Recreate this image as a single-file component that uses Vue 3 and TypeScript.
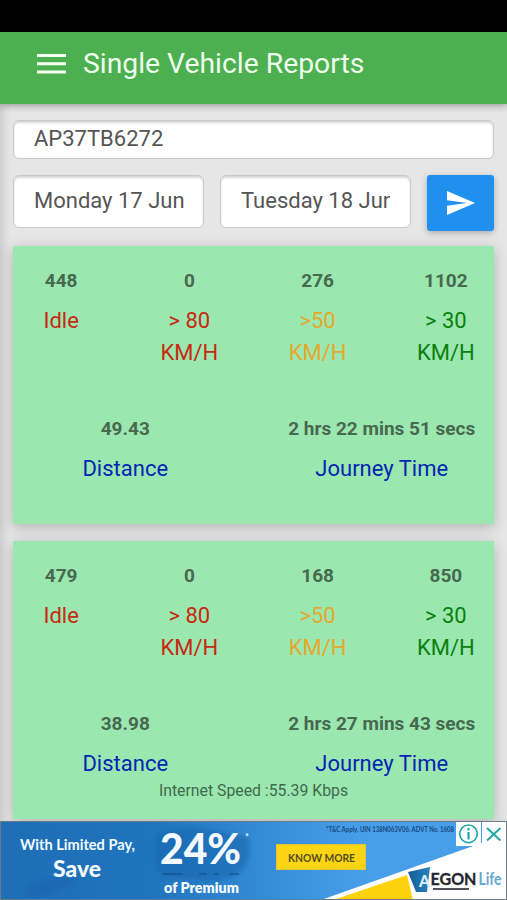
<script setup lang="ts">
interface Speed {
  value: string
  lines: string[]
  tone: string
}
interface Report {
  speeds: Speed[]
  distance: string
  time: string
}

const makeReport = (values: string[], distance: string, time: string): Report => ({
  speeds: [
    { value: values[0], lines: ['Idle'], tone: 'red' },
    { value: values[1], lines: ['> 80', 'KM/H'], tone: 'red' },
    { value: values[2], lines: ['>50', 'KM/H'], tone: 'orange' },
    { value: values[3], lines: ['> 30', 'KM/H'], tone: 'green' },
  ],
  distance,
  time,
})

const reports: Report[] = [
  makeReport(['448', '0', '276', '1102'], '49.43', '2 hrs 22 mins 51 secs'),
  makeReport(['479', '0', '168', '850'], '38.98', '2 hrs 27 mins 43 secs'),
]
</script>

<template>
  <div class="screen">
    <div class="status"></div>
    <header class="bar">
      <svg class="menu" width="29" height="20" viewBox="0 0 29 20">
        <path d="M0 0h29v3H0zM0 8.200h29v3H0zM0 16.400h29v3H0z" fill="#f4fff2" />
      </svg>
      <h1 class="title">Single Vehicle Reports</h1>
    </header>
    <main class="content">
      <div class="field vehicle">AP37TB6272</div>
      <div class="filters">
        <div class="field date"><span class="clip">Monday 17 Jun</span></div>
        <div class="field date"><span class="clip cut">Tuesday 18 Jun</span></div>
        <button class="send" type="button" aria-label="Send">
          <svg width="28" height="24" viewBox="0 0 28 24">
            <path d="M0 0L28 12L0 24V14.700L20 12L0 9.300z" fill="#fff" />
          </svg>
        </button>
      </div>
      <section v-for="(r, i) in reports" :key="i" class="card">
        <div class="row speeds">
          <div v-for="(s, j) in r.speeds" :key="j" class="cell">
            <b class="value">{{ s.value }}</b>
            <span v-for="l in s.lines" :key="l" class="label" :class="s.tone">{{ l }}</span>
          </div>
        </div>
        <div class="row totals">
          <div class="cell">
            <b class="value">{{ r.distance }}</b>
            <span class="label blue">Distance</span>
          </div>
          <div class="cell">
            <b class="value">{{ r.time }}</b>
            <span class="label blue">Journey Time</span>
          </div>
        </div>
      </section>
      <div class="net">Internet Speed :55.39 Kbps</div>
    </main>
    <footer class="ad">
      <svg width="507" height="79" viewBox="0 0 507 79">
        <defs>
          <linearGradient id="sky" x1="0" y1="0" x2="1" y2="0">
            <stop offset="0" stop-color="#1d6eb5" />
            <stop offset=".3" stop-color="#1f74bd" />
            <stop offset=".52" stop-color="#358cd6" />
            <stop offset=".72" stop-color="#479ee9" />
            <stop offset="1" stop-color="#479ee9" />
          </linearGradient>
          <linearGradient id="tile" x1="0" y1="0" x2="1" y2="0">
            <stop offset="0" stop-color="#175d94" />
            <stop offset="1" stop-color="#2482c0" />
          </linearGradient>
          <filter id="soft" x="-20%" y="-20%" width="140%" height="140%">
            <feGaussianBlur stdDeviation="2" />
          </filter>
        </defs>
        <rect width="507" height="79" fill="url(#sky)" />
        <path d="M26 70Q30 62 48 60L62 55L74 62L58 68L46 76H28z" fill="#1a63b0" opacity=".6" filter="url(#soft)" />
        <path d="M158 12Q180 4 205 8T247 15Q254 38 240 51Q224 63 203 60T160 55Q151 34 158 12z" fill="#1966ad" opacity=".55" filter="url(#soft)" />
        <path d="M507 13L321 79H507z" fill="#fff" />
        <path d="M407 54L333 79H413z" fill="#fbd20c" />
        <path d="M163 53h20M199 53h8M214 53h5M229 53h10" stroke="#16558f" stroke-width="2" opacity=".7" />
        <g font-family="Lato, sans-serif" fill="#f3faff">
          <text x="20" y="28.500" font-size="16" font-weight="700" textLength="115" lengthAdjust="spacingAndGlyphs">With Limited Pay,</text>
          <text x="53" y="56" font-size="23" font-weight="900" textLength="48" lengthAdjust="spacingAndGlyphs">Save</text>
          <text x="160" y="43" font-size="42" font-weight="900" textLength="81" lengthAdjust="spacingAndGlyphs">24%</text>
          <text x="245" y="19" font-size="9" font-weight="700">*</text>
          <text x="164" y="72" font-size="15" font-weight="800" textLength="75" lengthAdjust="spacingAndGlyphs">of Premium</text>
        </g>
        <text x="326" y="11" font-family="Lato, sans-serif" font-size="7" font-weight="700" fill="#174a80" textLength="128" lengthAdjust="spacingAndGlyphs">*T&amp;C Apply. UIN 138N063V06. ADVT No. 1608</text>
        <rect x="276.500" y="23.500" width="89" height="25" fill="#fbd414" stroke="#e0c43a" />
        <text x="288" y="40.500" font-family="Lato, sans-serif" font-size="11.500" font-weight="700" fill="#514c1d" textLength="67" lengthAdjust="spacingAndGlyphs">KNOW MORE</text>
        <path d="M408 51L430 46L427 71H416z" fill="url(#tile)" />
        <text x="419" y="65.500" font-family="Lato, sans-serif" font-size="17" font-weight="900" fill="#d9eefa" textLength="11" lengthAdjust="spacingAndGlyphs">A</text>
        <text x="430.500" y="63.500" font-family="Lato, sans-serif" font-size="17" font-weight="700" fill="#22262d" stroke="#22262d" stroke-width=".3" textLength="46" lengthAdjust="spacingAndGlyphs">EGON</text>
        <text x="478.500" y="63.500" font-family="Lato, sans-serif" font-size="16.500" font-weight="700" fill="#65a8d0" textLength="23" lengthAdjust="spacingAndGlyphs">Life</text>
        <path d="M433 68h36" stroke="#50545a" stroke-width="2" />
        <rect x="456" y="1" width="25" height="24" fill="#fff" />
        <rect x="482" y="1" width="25" height="24" fill="#fff" />
        <circle cx="468.500" cy="12.800" r="8.800" fill="none" stroke="#21a7a6" stroke-width="1.700" />
        <path d="M468.500 11v7.500M468.500 7v2.500" stroke="#21a7a6" stroke-width="2.200" />
        <path d="M487 7L500.500 19.500M500.500 7L487 19.500" stroke="#21a7a6" stroke-width="2" />
        <path d="M0 0.500H507M0 78.500H507M506.500 0V79M0.500 0V79" stroke="#6c7a86" stroke-width="1" fill="none" />
      </svg>
    </footer>
  </div>
</template>

<style>
body {
  background: #e4e4e4;
}
</style>

<style scoped>
.screen {
  width: 507px;
  height: 900px;
  overflow: hidden;
  display: flex;
  flex-direction: column;
  background: #e6e6e6;
  font-family: Roboto, sans-serif;
  color: #555;
}
.status {
  height: 32px;
  flex: none;
  background: #000;
}
.bar {
  height: 72px;
  flex: none;
  box-sizing: border-box;
  padding: 0 0 8px 37px;
  display: flex;
  align-items: center;
  gap: 17px;
  background: #4caf50;
  box-shadow: 0 2px 7px rgba(0, 0, 0, 0.3);
  z-index: 1;
}
.menu {
  flex: none;
}
.title {
  margin: 0;
  font-size: 28.3px;
  font-weight: 400;
  line-height: 34px;
  color: #effdec;
  white-space: nowrap;
}
.content {
  flex: 1;
  min-height: 0;
  padding: 16px 13px 0;
  position: relative;
  overflow: hidden;
  box-shadow: inset 8px 0 8px -5px rgba(0, 0, 0, 0.14);
}
.field {
  box-sizing: border-box;
  border: 1px solid #c8c8c8;
  border-radius: 6px;
  background: #fff;
  box-shadow: inset 0 2px 2px rgba(0, 0, 0, 0.16);
  padding: 0 18px 0 20px;
  font-size: 22px;
  white-space: nowrap;
}
.vehicle {
  height: 39px;
  line-height: 36px;
}
.filters {
  display: flex;
  gap: 16px;
  margin: 16px 0 15px;
  height: 56px;
}
.date {
  flex: none;
  width: 191px;
  height: 53px;
  line-height: 49px;
}
.clip {
  display: block;
  overflow: hidden;
}
.cut {
  width: 149px;
}
.send {
  flex: 1;
  height: 56px;
  border: 0;
  border-radius: 3px;
  padding: 0;
  background: #2090ef;
  display: grid;
  place-items: center;
  box-shadow: 0 2px 6px rgba(0, 0, 0, 0.25);
}
.card {
  height: 278px;
  box-sizing: border-box;
  margin-bottom: 17px;
  padding-top: 22px;
  background: #9ae7b0;
  box-shadow: 0 3px 13px rgba(0, 0, 0, 0.23);
}
.row {
  display: flex;
  margin: 0 -16px;
}
.speeds {
  height: 148px;
}
.cell {
  flex: 1 1 0;
  min-width: 0;
  display: flex;
  flex-direction: column;
  align-items: center;
  white-space: nowrap;
}
.value {
  font-size: 19px;
  line-height: 26px;
  margin-bottom: 11px;
  color: #48684f;
}
.label {
  font-size: 22px;
  line-height: 32px;
}
.red {
  color: #c72a10;
}
.orange {
  color: #e5a92b;
}
.green {
  color: #0a800d;
}
.blue {
  color: #0426b4;
}
.net {
  position: absolute;
  left: 0;
  right: 0;
  top: 677px;
  text-align: center;
  font-size: 15.8px;
  line-height: 20px;
  color: #3f6a4d;
}
.ad {
  height: 79px;
  flex: none;
}
.ad svg {
  display: block;
}
</style>
